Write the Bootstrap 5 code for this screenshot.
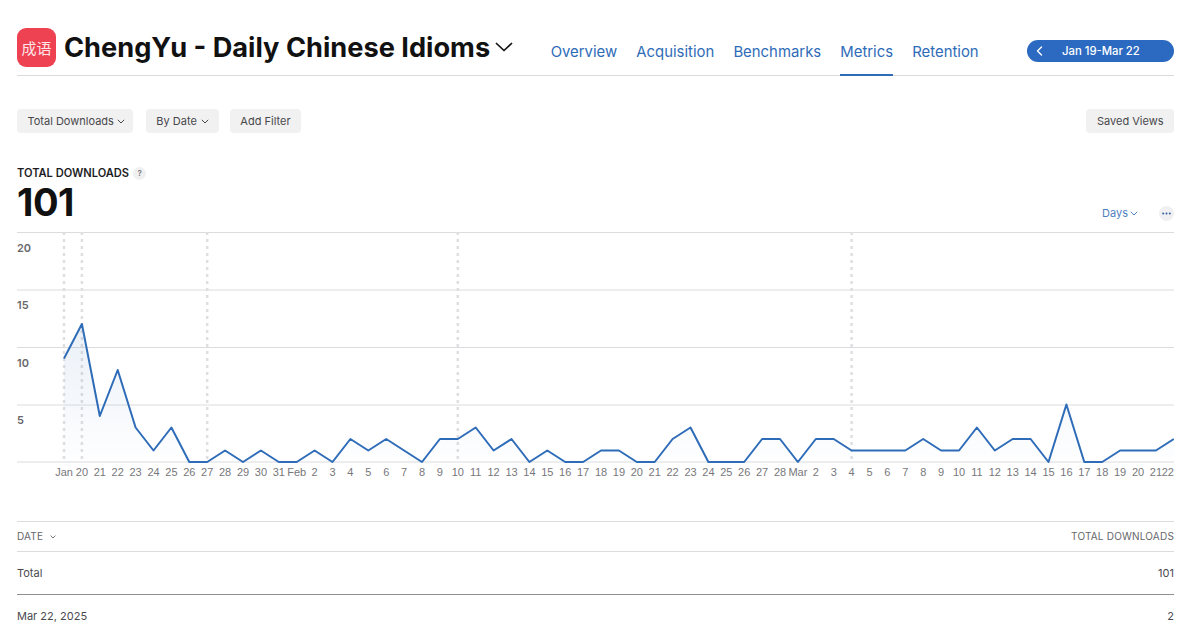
<!DOCTYPE html>
<html lang="en">
<head>
    <meta charset="UTF-8">
    <meta name="viewport" content="width=device-width, initial-scale=1.0">
    <title>ChengYu - Metrics</title>
    <link href="https://cdn.jsdelivr.net/npm/bootstrap@5.3.3/dist/css/bootstrap.min.css" rel="stylesheet">
    <style>
        body {
            margin: 0;
            font-family: Inter, "Liberation Sans", "Noto Sans CJK SC", sans-serif;
            color: #1d1d1f;
            background: #fff;
            overflow: hidden;
            height: 634px;
        }
        .page-wrap {
            padding: 0 26px 0 17px;
        }
        .app-head {
            height: 48px;
            margin-top: 28px;
            border-bottom: 1px solid #d9dadd;
        }
        .app-icon {
            width: 39px;
            height: 39px;
            border-radius: 9px;
            background: #ee4152;
            color: #fde6e8;
            font-family: "Noto Sans CJK SC", sans-serif;
            font-size: 15px;
            line-height: 39px;
            text-align: center;
        }
        .app-title {
            font-size: 27.2px;
            font-weight: 700;
            line-height: 39px;
            color: #111;
            margin: 0 0 0 8px;
            white-space: nowrap;
        }
        .title-caret {
            margin: 14px 0 0 5px;
        }
        .tab-row {
            margin-left: 37.5px;
            gap: 19.1px;
            height: 47px;
        }
        .tab-row .nav-link {
            padding: 12px 0 0;
            font-size: 14.9px;
            line-height: 24px;
            height: 48px;
            color: #2f6cb8;
        }
        .tab-row .nav-link.active {
            border-bottom: 2px solid #2f6cb8;
        }
        .range-pill {
            width: 147px;
            height: 22px;
            margin-top: 12px;
            border-radius: 11px;
            background: #2b6ac0;
            color: #fff;
            font-size: 11.3px;
            font-weight: 500;
            line-height: 22px;
            padding: 0 0 0 9px;
        }
        .range-pill span {
            margin-left: 19px;
        }
        .filter-row {
            margin-top: 33px;
        }
        .filter-btn {
            height: 24px;
            padding: 0 10.5px;
            border: 0;
            border-radius: 4px;
            background: #f1f1f2;
            color: #48484a;
            font-size: 11px;
            font-weight: 400;
            line-height: 24px;
            letter-spacing: 0;
        }
        .filter-btn.has-caret {
            padding-right: 8px;
            gap: 3px;
        }
        .filter-first {
            margin-right: 13px;
        }
        .filter-btn.filter-second {
            margin-right: 11px;
            padding-right: 10px;
            gap: 4px;
        }
        .metric-label {
            margin-top: 33px;
            font-size: 11.1px;
            font-weight: 600;
            line-height: 14px;
            color: #1d1d1f;
        }
        .help-dot {
            width: 13px;
            height: 13px;
            border-radius: 50%;
            background: #f0f0f1;
            color: #77777b;
            font-size: 8px;
            line-height: 13px;
            text-align: center;
            margin-left: 4px;
        }
        .metric-row {
            height: 52px;
        }
        .metric-value {
            font-size: 38px;
            font-weight: 700;
            line-height: 44px;
            color: #111;
            letter-spacing: -.5px;
        }
        .metric-tools {
            padding-top: 14px;
        }
        .days-link {
            color: #4f7fc0;
            font-size: 11px;
            line-height: 14px;
            gap: 2px;
        }
        .more-dot {
            width: 15px;
            height: 15px;
            border-radius: 50%;
            background: #f0f0f2;
            margin-left: 21px;
        }
        .chart-box {
            display: block;
            width: 1157px;
            height: 258px;
        }
        .axis-y {
            font-size: 11px;
            font-weight: 600;
            fill: #68686c;
        }
        .axis-x {
            font-family: "Liberation Sans", sans-serif;
            font-size: 11px;
            fill: #77777b;
        }
        .data-table {
            margin: 31px 0 0;
            font-size: 11px;
        }
        .table.data-table > :not(caption) > * > * {
            padding: 0;
            background: transparent;
            color: #4a4a4e;
            border-bottom: 0;
        }
        .table.data-table > thead > tr > th {
            font-weight: 400;
            height: 30px;
            vertical-align: middle;
            font-size: 10px;
            letter-spacing: .2px;
            color: #66666a;
            border-top: 1px solid #dcdcde;
            border-bottom: 1px solid #dcdcde;
        }
        .table.data-table > tbody > .total-cell > td {
            height: 43px;
            vertical-align: middle;
            border-bottom: 1px solid #8e8e92;
        }
        .table.data-table > tbody > .day-cell > td {
            height: 43px;
            vertical-align: middle;
        }
    </style>
</head>
<body>
    <div class="page-wrap">
        <!-- Header -->
        <div class="app-head d-flex align-items-start">
            <div class="app-icon flex-shrink-0">成语</div>
            <h1 class="app-title">ChengYu - Daily Chinese Idioms</h1>
            <svg class="title-caret" width="18" height="10" viewBox="0 0 18 10"><path d="M1.5 1.5 9 8.5l7.5-7" fill="none" stroke="#111" stroke-width="1.7" stroke-linecap="round" stroke-linejoin="round"/></svg>
            <ul class="nav tab-row flex-nowrap">
                <li class="nav-item"><a class="nav-link" href="#">Overview</a></li>
                <li class="nav-item"><a class="nav-link" href="#">Acquisition</a></li>
                <li class="nav-item"><a class="nav-link" href="#">Benchmarks</a></li>
                <li class="nav-item"><a class="nav-link active" href="#">Metrics</a></li>
                <li class="nav-item"><a class="nav-link" href="#">Retention</a></li>
            </ul>
            <div class="range-pill ms-auto d-flex align-items-center">
                <svg width="7" height="10" viewBox="0 0 7 10"><path d="M5.5 1 1.5 5l4 4" fill="none" stroke="#fff" stroke-width="1.4" stroke-linecap="round" stroke-linejoin="round"/></svg>
                <span>Jan 19-Mar 22</span>
            </div>
        </div>

        <!-- Filters -->
        <div class="filter-row d-flex">
            <button class="filter-btn has-caret filter-first d-flex align-items-center" type="button">Total Downloads
                <svg width="8" height="5" viewBox="0 0 8 5"><path d="M.8.8 4 4l3.2-3.2" fill="none" stroke="#48484a" stroke-width="1"/></svg>
            </button>
            <button class="filter-btn has-caret filter-second d-flex align-items-center" type="button">By Date
                <svg width="8" height="5" viewBox="0 0 8 5"><path d="M.8.8 4 4l3.2-3.2" fill="none" stroke="#48484a" stroke-width="1"/></svg>
            </button>
            <button class="filter-btn" type="button">Add Filter</button>
            <button class="filter-btn ms-auto" type="button">Saved Views</button>
        </div>

        <!-- Metric -->
        <div class="metric-label d-flex align-items-center">TOTAL DOWNLOADS <span class="help-dot">?</span></div>
        <div class="metric-row d-flex justify-content-between">
            <div class="metric-value">101</div>
            <div class="metric-tools d-flex align-items-center">
                <span class="days-link d-flex align-items-center">Days
                    <svg width="8" height="5" viewBox="0 0 8 5"><path d="M.8.8 4 4l3.2-3.2" fill="none" stroke="#4f7fc0" stroke-width="1"/></svg>
                </span>
                <span class="more-dot d-flex align-items-center justify-content-center">
                    <svg width="9" height="3" viewBox="0 0 9 3"><circle cx="1.2" cy="1.5" r="1" fill="#2f5f9e"/><circle cx="4.5" cy="1.5" r="1" fill="#2f5f9e"/><circle cx="7.8" cy="1.5" r="1" fill="#2f5f9e"/></svg>
                </span>
            </div>
        </div>

        <!-- Chart -->
        <svg class="chart-box" id="chart" viewBox="0 0 1157 258"></svg>

        <!-- Table -->
        <table class="table data-table">
            <thead>
                <tr>
                    <th>DATE <svg class="ms-1" width="6" height="4" viewBox="0 0 6 4"><path d="M.6.6 3 3 5.4.6" fill="none" stroke="#66666a" stroke-width=".9"/></svg></th>
                    <th class="text-end">TOTAL DOWNLOADS</th>
                </tr>
            </thead>
            <tbody>
                <tr class="total-cell"><td>Total</td><td class="text-end">101</td></tr>
                <tr class="day-cell"><td>Mar 22, 2025</td><td class="text-end">2</td></tr>
            </tbody>
        </table>
    </div>

    <script>
        // daily downloads, Jan 19 to Mar 22
        const counts = [9,12,4,8,3,1,3,0,0,1,0,1,0,0,1,0,2,1,2,1,0,2,2,3,1,2,0,1,0,0,1,1,0,0,2,3,0,0,0,2,2,
                        0,2,2,1,1,1,1,2,1,1,3,1,2,2,0,5,0,0,1,1,1,2];
        const stepX = 17.9, startX = 47, baseY = 230, unitY = 11.5, rightX = 1157;
        const px = i => startX + i * stepX;
        const py = v => baseY - v * unitY;

        // labels under the line: Jan 19 shows as "Jan", Feb 1 as "Feb", Mar 1 as "Mar"
        function dayLabel(i) {
            if (i === 0) return 'Jan';
            if (i <= 12) return String(19 + i);
            if (i === 13) return 'Feb';
            if (i <= 40) return String(i - 12);
            if (i === 41) return 'Mar';
            return String(i - 40);
        }

        let out = '<defs><linearGradient id="areaFade" x1="0" y1="0" x2="0" y2="1">' +
            '<stop offset="0" stop-color="#2f6cb8" stop-opacity=".1"/><stop offset="1" stop-color="#2f6cb8" stop-opacity=".005"/>' +
            '</linearGradient></defs>';

        [20, 15, 10, 5, 0].forEach(v => {
            const y = py(v) + (v === 0 ? 0 : 0.5);
            out += `<line x1="0" x2="${rightX}" y1="${y}" y2="${y}" stroke="#dcdcde" stroke-width="1"/>`;
            if (v > 0) out += `<text class="axis-y" x="0" y="${y + 19}">${v}</text>`;
        });

        [0, 1, 8, 22, 44].forEach(i => {
            out += `<line x1="${px(i)}" x2="${px(i)}" y1="0" y2="${baseY}" stroke="#dfdfe2" stroke-width="2.5" stroke-dasharray="3 4"/>`;
        });

        const pts = counts.map((v, i) => `${px(i).toFixed(1)},${py(v)}`).join(' ');
        out += `<polygon points="${px(0)},${baseY} ${pts} ${px(62)},${baseY}" fill="url(#areaFade)"/>`;
        out += `<polyline points="${pts}" fill="none" stroke="#2f6cb8" stroke-width="2" stroke-linejoin="round"/>`;

        counts.forEach((v, i) => {
            const last = i === counts.length - 1;
            out += `<text class="axis-x" x="${last ? rightX : px(i)}" y="244" text-anchor="${last ? 'end' : 'middle'}">${dayLabel(i)}</text>`;
        });
        document.getElementById('chart').innerHTML = out;
    </script>
    <script src="https://cdn.jsdelivr.net/npm/bootstrap@5.3.3/dist/js/bootstrap.bundle.min.js"></script>
</body>
</html>
